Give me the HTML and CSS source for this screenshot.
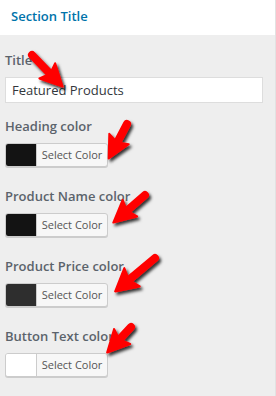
FILE: index.html
```html
<!DOCTYPE html>
<html lang="en">
<head>
  <meta charset="UTF-8">
  <title>Section Title</title>
  <link rel="stylesheet" href="styles.css">
</head>
<body>
  <div class="panel">
    <div class="section-header">Section Title</div>

    <div class="fields">
      <!-- title -->
      <div class="field field-title">
        <label for="title">Title</label>
        <input type="text" id="title" value="Featured Products">
      </div>

      <!-- colors -->
      <div class="field">
        <label>Heading color</label>
        <button class="color-btn"><span class="swatch swatch-dark"></span><span class="btn-text">Select Color</span></button>
      </div>
      <div class="field">
        <label>Product Name color</label>
        <button class="color-btn"><span class="swatch swatch-dark"></span><span class="btn-text">Select Color</span></button>
      </div>
      <div class="field">
        <label>Product Price color</label>
        <button class="color-btn"><span class="swatch swatch-grey"></span><span class="btn-text">Select Color</span></button>
      </div>
      <div class="field">
        <label>Button Text color</label>
        <button class="color-btn"><span class="swatch swatch-white"></span><span class="btn-text">Select Color</span></button>
      </div>
    </div>
  </div>

  <!-- annotation arrows -->
  <svg class="arrows" width="276" height="396" viewBox="0 0 276 396">
    <defs>
      <filter id="shadow" x="-30%" y="-30%" width="160%" height="160%">
        <feDropShadow dx="2" dy="2.5" stdDeviation="1.4" flood-color="#000" flood-opacity="0.8"/>
      </filter>
    </defs>
    <g filter="url(#shadow)" fill="#f00" stroke="#f00" stroke-linejoin="round">
      <g transform="translate(32,55) rotate(46)">
        <line x1="0" y1="0" x2="26" y2="0" stroke-width="8" stroke-linecap="round"/>
        <polygon points="44,0 22,-11 26,0 22,11" stroke-width="2"/>
      </g>
      <g transform="translate(127,124) rotate(118)">
        <line x1="0" y1="0" x2="21" y2="0" stroke-width="8" stroke-linecap="round"/>
        <polygon points="39,0 17,-11 21,0 17,11" stroke-width="2"/>
      </g>
      <g transform="translate(145,195) rotate(139)">
        <line x1="0" y1="0" x2="24" y2="0" stroke-width="8" stroke-linecap="round"/>
        <polygon points="42,0 20,-11 24,0 20,11" stroke-width="2"/>
      </g>
      <g transform="translate(155,258) rotate(140)">
        <line x1="0" y1="0" x2="34" y2="0" stroke-width="8" stroke-linecap="round"/>
        <polygon points="52,0 30,-12 34,0 30,12" stroke-width="2"/>
      </g>
      <g transform="translate(131,327) rotate(133)">
        <line x1="0" y1="0" x2="17" y2="0" stroke-width="8" stroke-linecap="round"/>
        <polygon points="35,0 13,-11 17,0 13,11" stroke-width="2"/>
      </g>
    </g>
  </svg>
</body>
</html>
```

FILE: styles.css
```css
body {
  margin: 0;
  background: #eeeeee;
  font-family: "Open Sans", Arial, sans-serif;
}
.panel {
  width: 275px;
  border-right: 1px solid #e2e2e2;
  min-height: 396px;
}
.section-header {
  background: #fff;
  height: 35px;
  line-height: 33px;
  padding-left: 11px;
  font-size: 13px;
  font-weight: 600;
  color: #0073aa;
}
.fields {
  padding: 15px 13px 0 5px;
}
.field {
  margin-bottom: 19px;
}
.field-title {
  margin-bottom: 13px;
}
label {
  display: block;
  line-height: 20px;
  font-size: 13px;
  font-weight: 600;
  color: #5b636b;
  margin-bottom: 7px;
}
input[type="text"] {
  box-sizing: border-box;
  width: 258px;
  height: 26px;
  margin: 0;
  padding: 0 6px;
  border: 1px solid #dddddd;
  background: #fff;
  font-family: inherit;
  font-size: 13px;
  color: #32373c;
}
.color-btn {
  display: flex;
  align-items: stretch;
  box-sizing: border-box;
  width: 103px;
  height: 24px;
  padding: 0;
  border: 1px solid #cccccc;
  border-radius: 3px;
  background: #f7f7f7;
  box-shadow: 0 1px 0 #cccccc;
  overflow: hidden;
  font-family: inherit;
}
.swatch {
  width: 30px;
  border-right: 1px solid #cccccc;
}
.swatch-dark { background: #131313; }
.swatch-grey { background: #2e2e2e; }
.swatch-white { background: #ffffff; }
.btn-text {
  flex: 1;
  line-height: 22px;
  font-size: 11px;
  color: #555555;
  text-align: center;
}
.arrows {
  position: absolute;
  left: 0;
  top: 0;
  pointer-events: none;
}
```
